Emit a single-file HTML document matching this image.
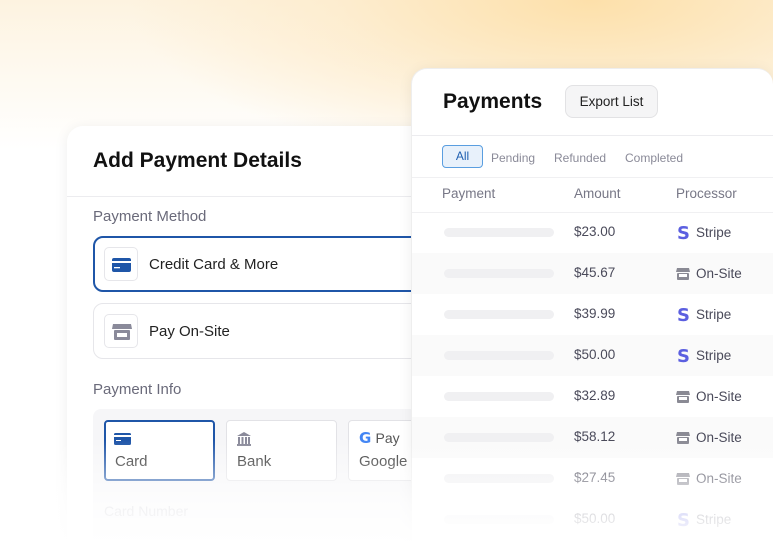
<!DOCTYPE html>
<html><head><style>
*{margin:0;padding:0;box-sizing:border-box}
html,body{width:773px;height:556px;overflow:hidden}
body{position:relative;font-family:"Liberation Sans",sans-serif;background:radial-gradient(ellipse 460px 170px at 590px 0px,#fde0aa 0%,rgba(253,234,200,.7) 55%,rgba(255,255,255,0) 100%),linear-gradient(#fdf3e0 0px,#fef9ef 70px,#fff 150px);}
.card{position:absolute;background:#fff;border-radius:16px 16px 0 0;box-shadow:0 2px 14px rgba(0,0,0,.07);overflow:hidden}
#l{left:67px;top:126px;width:420px;height:430px}
#r{left:411px;top:68px;width:362px;height:488px;border:1px solid #eee;border-right:0}
.h1{position:absolute;font-weight:bold;color:#111}
.lbl{position:absolute;left:26px;font-size:15px;color:#6a6a7a}
.opt{position:absolute;left:26px;width:400px;height:56px;border:1px solid #e6e6ea;border-radius:10px}
.opt .ic{position:absolute;left:10px;top:10px;width:34px;height:34px;border:1px solid #e6e6ea;border-radius:5px}
.opt span{position:absolute;left:55px;top:19px;font-size:15px;color:#222}
.tile{position:absolute;top:294px;width:111px;height:61px;background:#fff;border:1px solid #e2e2e6;border-radius:4px}
.tile span{position:absolute;left:10px;top:32px;font-size:15px;color:#333}
.row{position:absolute;left:0;width:380px;height:41px}
.row .bar{position:absolute;left:32px;top:16px;width:110px;height:9px;border-radius:5px;background:#f0f0f2}
.row .amt{position:absolute;left:162px;top:12px;font-size:13.5px;color:#4a4a5a}
.row .pr{position:absolute;left:266px;top:13px;font-size:13.5px;color:#4a4a5a}
.s{position:absolute;left:265px;top:11px;font-weight:bold;font-size:18px;color:#5b5fe0;font-family:"DejaVu Sans",sans-serif}
.sh{position:absolute;left:264px;top:14px}
</style></head><body>
<div class="card" id="l">
 <div class="h1" style="left:26px;top:23px;font-size:21px">Add Payment Details</div>
 <div style="position:absolute;left:0;top:70px;width:100%;border-top:1px solid #ececef"></div>
 <div class="lbl" style="top:82px">Payment Method</div>
 <div class="opt" style="top:110px;border:2px solid #1f56a8"><div class="ic" style="left:9px;top:9px"><svg width="34" height="34"><rect x="7" y="10" width="19" height="14" rx="2" fill="#1f56a8"/><rect x="7" y="13" width="19" height="2" fill="#fff"/><rect x="9" y="19" width="6" height="1.3" fill="#fff"/></svg></div><span style="left:54px;top:18px">Credit Card &amp; More</span></div>
 <div class="opt" style="top:177px"><div class="ic"><svg width="34" height="34"><path d="M8 9h18l1 5H7z" fill="#8a8a9a"/><rect x="9" y="15" width="16" height="10" rx="1" fill="#8a8a9a"/><rect x="12" y="18" width="10" height="4" fill="#fff"/></svg></div><span>Pay On-Site</span></div>
 <div class="lbl" style="top:255px">Payment Info</div>
 <div style="position:absolute;left:26px;top:283px;width:400px;height:200px;background:#f6f6f8;border-radius:8px"></div>
 <div class="tile" style="left:37px;border:2px solid #1f56a8"><svg style="position:absolute;left:8px;top:10px" width="18" height="14"><rect x="0" y="1" width="17" height="12" rx="1.5" fill="#1f56a8"/><rect x="0" y="3" width="17" height="2" fill="#fff"/><rect x="2" y="8" width="5" height="1" fill="#fff"/></svg><span style="left:9px;top:31px">Card</span></div>
 <div class="tile" style="left:159px"><svg style="position:absolute;left:9px;top:10px" width="16" height="16"><path d="M1 5L8 1l7 4z" fill="#8a8a9a"/><rect x="2" y="6" width="2" height="7" fill="#8a8a9a"/><rect x="5.5" y="6" width="2" height="7" fill="#8a8a9a"/><rect x="9" y="6" width="2" height="7" fill="#8a8a9a"/><rect x="12" y="6" width="2" height="7" fill="#8a8a9a"/><rect x="1" y="13" width="14" height="2" fill="#8a8a9a"/></svg><span>Bank</span></div>
 <div class="tile" style="left:281px"><span style="top:8px;left:10px"><b style="color:#4285f4;font-family:'DejaVu Sans'">G</b> <span style="position:static;color:#555;font-size:14px">Pay</span></span><span>Google</span></div>
 <div style="position:absolute;left:37px;top:377px;font-size:14px;color:#c4c4cc">Card Number</div>
</div>
<div class="card" id="r">
 <div class="h1" style="left:31px;top:21px;font-size:21px">Payments</div>
 <div style="position:absolute;left:153px;top:16px;width:93px;height:33px;background:#f5f5f6;border:1px solid #e2e2e4;border-radius:8px;font-size:13.5px;color:#222;text-align:center;line-height:31px">Export List</div>
 <div style="position:absolute;left:0;top:66px;width:100%;border-top:1px solid #ececef"></div>
 <div style="position:absolute;left:30px;top:76px;width:41px;height:23px;background:#e8f1fb;border:1px solid #5a9ee0;border-radius:4px;font-size:12px;color:#1f5fb0;text-align:center;line-height:21px">All</div>
 <div style="position:absolute;left:79px;top:82px;font-size:12px;color:#8a8a98">Pending</div>
 <div style="position:absolute;left:142px;top:82px;font-size:12px;color:#8a8a98">Refunded</div>
 <div style="position:absolute;left:213px;top:82px;font-size:12px;color:#8a8a98">Completed</div>
 <div style="position:absolute;left:0;top:108px;width:100%;border-top:1px solid #f0f0f2"></div>
 <div style="position:absolute;left:30px;top:117px;font-size:13.5px;color:#777786">Payment</div>
 <div style="position:absolute;left:162px;top:117px;font-size:13.5px;color:#777786">Amount</div>
 <div style="position:absolute;left:264px;top:117px;font-size:13.5px;color:#777786">Processor</div>
 <div style="position:absolute;left:0;top:143px;width:100%;border-top:1px solid #f0f0f2"></div>
 <div class="row" style="top:143px"><div class="bar"></div><div class="amt">$23.00</div><div class="s">S</div><div class="pr" style="left:284px">Stripe</div></div>
 <div class="row" style="top:184px;background:#fafafa"><div class="bar"></div><div class="amt">$45.67</div><svg class="sh" width="14" height="14"><path d="M1 1h12l1 4H0z" fill="#8a8a94"/><rect x="1" y="6" width="12" height="7" rx="1" fill="#8a8a94"/><rect x="3" y="7" width="8" height="3" fill="#fff"/></svg><div class="pr" style="left:284px">On-Site</div></div>
 <div class="row" style="top:225px"><div class="bar"></div><div class="amt">$39.99</div><div class="s">S</div><div class="pr" style="left:284px">Stripe</div></div>
 <div class="row" style="top:266px;background:#fafafa"><div class="bar"></div><div class="amt">$50.00</div><div class="s">S</div><div class="pr" style="left:284px">Stripe</div></div>
 <div class="row" style="top:307px"><div class="bar"></div><div class="amt">$32.89</div><svg class="sh" width="14" height="14"><path d="M1 1h12l1 4H0z" fill="#8a8a94"/><rect x="1" y="6" width="12" height="7" rx="1" fill="#8a8a94"/><rect x="3" y="7" width="8" height="3" fill="#fff"/></svg><div class="pr" style="left:284px">On-Site</div></div>
 <div class="row" style="top:348px;background:#fafafa"><div class="bar"></div><div class="amt">$58.12</div><svg class="sh" width="14" height="14"><path d="M1 1h12l1 4H0z" fill="#8a8a94"/><rect x="1" y="6" width="12" height="7" rx="1" fill="#8a8a94"/><rect x="3" y="7" width="8" height="3" fill="#fff"/></svg><div class="pr" style="left:284px">On-Site</div></div>
 <div class="row" style="top:389px"><div class="bar"></div><div class="amt">$27.45</div><svg class="sh" width="14" height="14"><path d="M1 1h12l1 4H0z" fill="#8a8a94"/><rect x="1" y="6" width="12" height="7" rx="1" fill="#8a8a94"/><rect x="3" y="7" width="8" height="3" fill="#fff"/></svg><div class="pr" style="left:284px">On-Site</div></div>
 <div class="row" style="top:430px"><div class="bar"></div><div class="amt">$50.00</div><div class="s">S</div><div class="pr" style="left:284px">Stripe</div></div>
</div>
<div style="position:absolute;left:0;top:440px;width:773px;height:116px;background:linear-gradient(rgba(255,255,255,0),rgba(255,255,255,.75) 55%,#fff 90%)"></div>
</body></html>
